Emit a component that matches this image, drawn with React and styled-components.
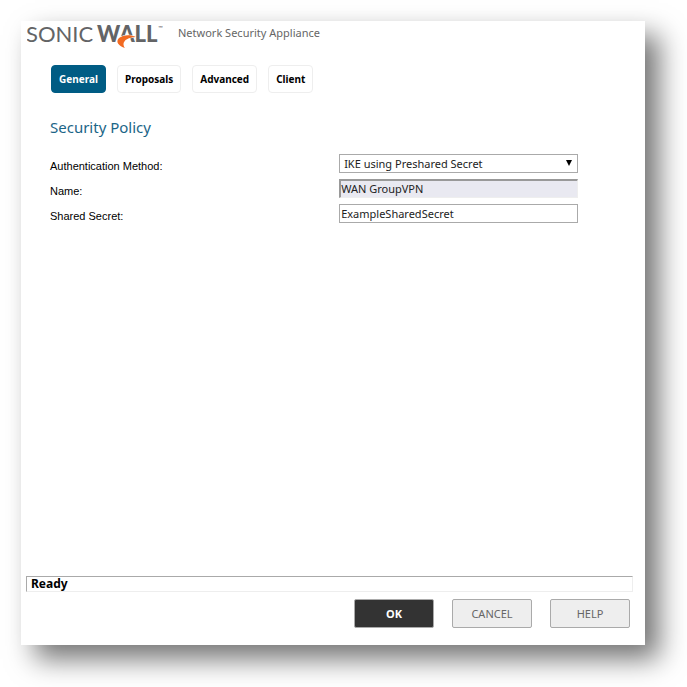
import React, { useState } from 'react';
import styled, { createGlobalStyle } from 'styled-components'

const TABS = ['General', 'Proposals', 'Advanced', 'Client']

function Logo() {
    return (
        <LogoSvg viewBox="0 0 140 28" role="img" aria-label="SonicWall">
            <LogoText x="-1" y="21" $weight={400}>SONIC</LogoText>
            <LogoText x="70" y="21" $weight={900}>WALL</LogoText>
            <TradeMark x="131" y="9">™</TradeMark>
            <path
                d="M109 16 C103 13 96 14 92 17 C88 21 92 25 98 27 C95 23 96 17 109 16 Z"
                fill="#f26a21"
                stroke="#fff"
                strokeWidth="1"
                paintOrder="stroke"
            />
        </LogoSvg>
    );
}

function App() {
    const [tab, setTab] = useState('General')
    const [secret, setSecret] = useState('ExampleSharedSecret')

    return (
        <>
            <GlobalStyle />
            <Dialog>
                <Header>
                    <Logo />
                    <Product>Network Security Appliance</Product>
                </Header>
                <Tabs>
                    {TABS.map((name) => (
                        <Tab key={name} type="button" $active={name === tab} onClick={() => setTab(name)}>
                            {name}
                        </Tab>
                    ))}
                </Tabs>
                <Content>
                    <Title>Security Policy</Title>
                    <Form id="policy" onSubmit={(e) => e.preventDefault()}>
                        <Label htmlFor="method">Authentication Method:</Label>
                        <SelectBox>
                            <Select id="method">
                                <option>IKE using Preshared Secret</option>
                            </Select>
                            <Arrow viewBox="0 0 6 6" aria-hidden="true">
                                <path d="M0 0H6L3 6Z" fill="#000" />
                            </Arrow>
                        </SelectBox>
                        <Label htmlFor="name">Name:</Label>
                        <Input id="name" value="WAN GroupVPN" readOnly />
                        <Label htmlFor="secret">Shared Secret:</Label>
                        <Input id="secret" value={secret} onChange={(e) => setSecret(e.target.value)} />
                    </Form>
                </Content>
                <Status role="status">Ready</Status>
                <Actions>
                    <Button type="submit" form="policy" $primary>OK</Button>
                    <Button type="button">CANCEL</Button>
                    <Button type="button">HELP</Button>
                </Actions>
            </Dialog>
        </>
    );
}

export default App;

const GlobalStyle = createGlobalStyle`
    * {
        box-sizing: border-box;
    }

    body {
        margin: 0;
        background: #fff;
        color: #000;
        font-family: 'Noto Sans', 'Open Sans', sans-serif;
        font-size: 11px;
    }

    button, input, select {
        margin: 0;
        font-family: inherit;
    }

    #root {
        display: flow-root;
    }
`

const Dialog = styled.main`
    display: flex;
    flex-direction: column;
    min-height: calc(100vh - 63px);
    margin: 21px 42px 42px 21px;
    padding: 0 12px 17px 5px;
    background: #fff;
    box-shadow: 14px 14px 26px rgba(0, 0, 0, 0.55);
`

const Header = styled.header`
    display: flex;
    height: 44px;
    padding-left: 1px;
    gap: 11px;
`

const LogoSvg = styled.svg`
    width: 140px;
    height: 28px;
`

const LogoText = styled.text`
    font-family: Lato, sans-serif;
    font-size: 22px;
    font-weight: ${(props) => props.$weight};
    fill: #636466;
`

const TradeMark = styled.text`
    font-family: Lato, sans-serif;
    font-size: 6px;
    fill: #636466;
`

const Product = styled.span`
    color: #666;
    line-height: 24px;
`

const Tabs = styled.nav`
    display: flex;
    gap: 11px;
    padding-left: 25px;
`

const Tab = styled.button`
    height: 28px;
    padding: 0 7px;
    border: 1px solid ${(props) => (props.$active ? '#005c84' : '#eee')};
    border-radius: 4px;
    background: ${(props) => (props.$active ? '#005c84' : '#fff')};
    color: ${(props) => (props.$active ? '#fff' : '#000')};
    font-size: 10px;
    font-weight: 700;
`

const Content = styled.section`
    flex: 1;
    padding: 22px 55px 24px 24px;
`

const Title = styled.h1`
    margin: 0;
    color: #1b6587;
    font-size: 15px;
    font-weight: 400;
    line-height: 24px;
`

const Form = styled.form`
    display: grid;
    grid-template-columns: 23fr 19fr;
    row-gap: 6px;
    padding-top: 15px;
`

const Label = styled.label`
    padding-top: 5px;
    font-family: 'Liberation Sans', Arial, sans-serif;
    font-size: 11px;
    line-height: 14px;
`

const SelectBox = styled.div`
    position: relative;
    height: 19px;
`

const Select = styled.select`
    display: block;
    width: 100%;
    height: 19px;
    padding: 0 20px 0 4px;
    border: 1px solid #aaa;
    border-radius: 0;
    background: #fff;
    color: #222;
    font-size: 11px;
    appearance: none;
`

const Arrow = styled.svg`
    position: absolute;
    top: 6px;
    right: 6px;
    width: 6px;
    height: 6px;
    pointer-events: none;
`

const Input = styled.input`
    width: 100%;
    height: 19px;
    padding: 0 1px 1px;
    border: 1px solid #aaa;
    background: #fff;
    color: #222;
    font-size: 11px;

    &:read-only {
        padding: 0 1px 2px 0;
        border-width: 2px 1px 1px 2px;
        border-color: #999 #eee #eee #999;
        background: #e9e9f1;
    }
`

const Status = styled.div`
    height: 16px;
    padding-left: 4px;
    border: 1px solid #eee;
    border-top-color: #aaa;
    border-left-color: #aaa;
    font-size: 12px;
    font-weight: 700;
    line-height: 14px;
`

const Actions = styled.footer`
    display: flex;
    justify-content: flex-end;
    gap: 18px;
    padding: 7px 3px 0 0;
`

const Button = styled.button`
    width: 80px;
    height: 29px;
    padding: 0;
    border: 1px solid #aaa;
    border-radius: 2px;
    background: ${(props) => (props.$primary ? '#333' : '#eee')};
    color: ${(props) => (props.$primary ? '#fff' : '#666')};
    font-size: 11px;
    font-weight: ${(props) => (props.$primary ? 700 : 400)};
`
